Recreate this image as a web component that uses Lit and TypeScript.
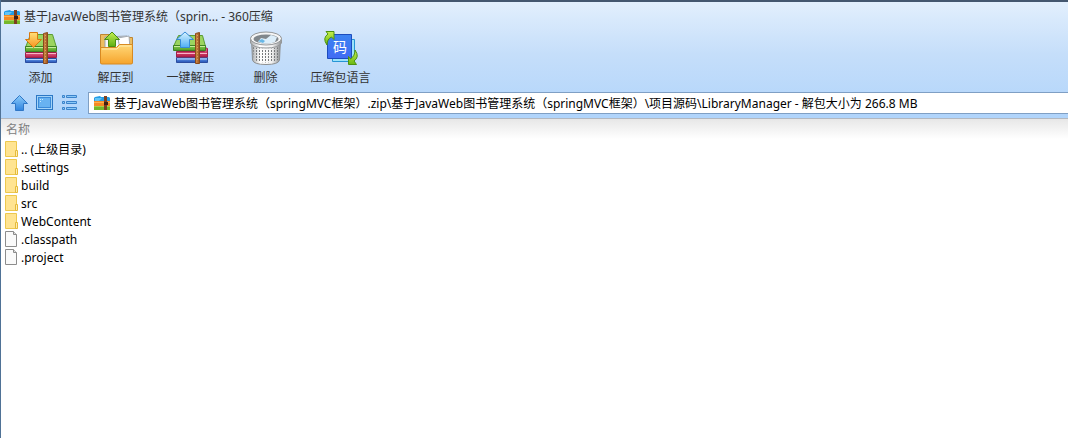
import { LitElement, html, css, svg, nothing } from "lit";
import { customElement, property, state } from "lit/decorators.js";

type Entry = { name: string; kind: "folder" | "file" };
type Tool = { icon: string; label: string };

const TOOLS: Tool[] = [
  { icon: "add", label: "添加" },
  { icon: "extract", label: "解压到" },
  { icon: "quick", label: "一键解压" },
  { icon: "trash", label: "删除" },
  { icon: "language", label: "压缩包语言" },
];

const ENTRIES: Entry[] = [
  { name: ".. (上级目录)", kind: "folder" },
  { name: ".settings", kind: "folder" },
  { name: "build", kind: "folder" },
  { name: "src", kind: "folder" },
  { name: "WebContent", kind: "folder" },
  { name: ".classpath", kind: "file" },
  { name: ".project", kind: "file" },
];

const gradient = (id: string, from: string, to: string) => svg`
  <linearGradient id=${id} x1="0" y1="0" x2="0" y2="1">
    <stop offset="0" stop-color=${from} /><stop offset="1" stop-color=${to} />
  </linearGradient>`;

const strap = svg`
  <path d="M21.500 4.500l4-1v31h-4z" fill="url(#strap)" stroke="#8a4a1c" />
  <path d="M23.500 6v27" stroke="#e0a058" stroke-dasharray="1 2" />`;

const archiveDefs = svg`<defs>
  ${gradient("green", "#86cf4c", "#4f9c28")}
  ${gradient("red", "#e8658c", "#b51c4b")}
  ${gradient("blue", "#6fa5f0", "#2351b5")}
  <linearGradient id="strap"><stop offset="0" stop-color="#d9944e" /><stop offset="1" stop-color="#97521f" /></linearGradient>
  ${gradient("orange", "#ffe079", "#f79520")}
  ${gradient("sky", "#d8f3ff", "#4eaef5")}
</defs>`;

const ICONS: Record<string, unknown> = {
  add: svg`<svg class="big" viewBox="0 0 38 38">${archiveDefs}
    <path d="M3.500 29.500h31v4h-31z" fill="url(#blue)" stroke="#2b4da0" />
    <path d="M4 30.500h30" stroke="#b5d2fa" />
    <path d="M3.500 23.500h31v5h-31z" fill="url(#red)" stroke="#9c2148" />
    <path d="M4 24.500h30" stroke="#f9b3c6" />
    <path d="M8.500 5.500h22l4 13h-31z" fill="#9bd45f" stroke="#5a9c33" />
    <path d="M3.500 17.500h31v5h-31z" fill="url(#green)" stroke="#3f8222" />
    <path d="M4 18.500h30" stroke="#c8eb9c" />
    ${strap}
    <path d="M7.500 3.500h8v7h4l-8 8-8-8h4z" fill="url(#orange)" stroke="#d87910" stroke-linejoin="round" />
  </svg>`,
  extract: svg`<svg class="big" viewBox="0 0 38 38"><defs>
      ${gradient("folder", "#ffd878", "#f6a42c")}${gradient("up", "#c7f052", "#5cae13")}</defs>
    <path d="M3.500 34V5.500h9l2 3h21V34z" fill="#edbd60" stroke="#bd8634" />
    <path d="M8 8l22-1 3 11-25 3z" fill="#f6f7fa" stroke="#9ba3ac" />
    <path d="M21 9l11-2 1 12-10 2z" fill="#fff" stroke="#a2a9b0" />
    <path d="M3.500 18.500h16l3-3h13v18q0 1.500-1.500 1.500H5q-1.500 0-1.500-1.500z" fill="url(#folder)" stroke="#d88a22" />
    <path d="M5 20h15l3-3h11" fill="none" stroke="#ffedae" />
    <path d="M11.500 17.500v-7h-4l7.500-7.500 7.500 7.500h-4v7z" fill="url(#up)" stroke="#4a8d13" stroke-linejoin="round" />
  </svg>`,
  quick: svg`<svg class="big" viewBox="0 0 38 38">${archiveDefs}
    <path d="M4.500 28.500h31v5h-31z" fill="url(#blue)" stroke="#2b4da0" />
    <path d="M5 30h30" stroke="#b5d2fa" />
    <path d="M4.500 22.500h28l.5-4 2.500 1v8.500h-31z" fill="url(#red)" stroke="#9c2148" />
    <path d="M5 24.500h30" stroke="#f9b3c6" />
    <path d="M6.500 6.500h24l3 11h-32z" fill="#9bd45f" stroke="#5a9c33" />
    <path d="M1.500 16.500h32v5h-32z" fill="url(#green)" stroke="#3f8222" />
    <path d="M2 17.500h31" stroke="#c8eb9c" />
    <g transform="translate(2 0)">${strap}</g>
    <path d="M8.500 18.500v-8h-4l8.500-7.500 8.500 7.500h-4v8z" fill="url(#sky)" stroke="#368bd7" stroke-linejoin="round" />
  </svg>`,
  trash: svg`<svg class="big" viewBox="0 0 38 38"><defs>
      <linearGradient id="can"><stop offset="0" stop-color="#a5a8aa" /><stop offset=".3" stop-color="#fff" />
      <stop offset=".7" stop-color="#f3f3f3" /><stop offset="1" stop-color="#8d9092" /></linearGradient>
      <pattern id="holes" width="3" height="3" patternUnits="userSpaceOnUse">
        <rect width="1" height="2" fill="#777a7c" /></pattern></defs>
    <path d="M4.500 10l1 21q1 4.500 13.500 4.500t13.500-4.500l1-21z" fill="url(#can)" stroke="#8c8f91" />
    <path d="M6 18q13 4 26 0l-1 13q-12 5-24 0z" fill="url(#holes)" />
    <path d="M3.500 9v5q3 5 15.500 5t15.500-5V9z" fill="url(#can)" stroke="#95989a" />
    <ellipse cx="19" cy="9.500" rx="15.500" ry="6.500" fill="#f5f5f5" stroke="#95989a" />
    <ellipse cx="19" cy="10" rx="12.500" ry="4.500" fill="#80878c" />
    <path d="M11 13l3-4 5 1 5-4 6 2-2 5q-8 3-17 0z" fill="#dceefa" />
    <path d="M11 12l4-2 3 2-2 2z" fill="#69b7e5" />
  </svg>`,
  language: svg`<svg class="big" viewBox="0 0 38 38"><defs>
      ${gradient("page", "#3c83f1", "#416cf4")}${gradient("turn", "#c8ef4c", "#68b813")}</defs>
    <path d="M10.500 10.500h22v22h-22z" fill="#9ce2fa" stroke="#2695d5" />
    <path d="M5.500 5.500h24v24h-24z" fill="url(#page)" stroke="#1d4cbd" />
    <text class="glyph" x="18" y="23" text-anchor="middle">码</text>
    <path d="M5 16q-5-7 1-11L4 2.500h8v8L9.500 8Q5 10 5 16z" fill="url(#turn)" stroke="#4e9210" stroke-linejoin="round" />
    <path d="M33 21q5 7-1 11l2.500 3.500h-8v-8l2 2.500Q33 27 33 21z" fill="url(#turn)" stroke="#4e9210" stroke-linejoin="round" />
  </svg>`,
  app: svg`<svg class="app" viewBox="0 0 16 14">
    <path d="M1 1l5-1 1 1h8l1 1v3H0V2z" fill="#249ce5" /><path d="M1 2h7l-3 3H1z" fill="#63c5f6" />
    <path d="M0 5h16v5H0z" fill="#f58a24" /><path d="M0 6h16v1H0z" fill="#ffb04c" />
    <path d="M0 10h16v4H0z" fill="#76b82b" /><path d="M0 10h16v1H0z" fill="#a4d04c" />
    <path d="M10 0h3v14h-3z" fill="#7c4020" /><path d="M10 6h4v3h-4z" fill="#402014" />
  </svg>`,
  up: svg`<svg class="nav" viewBox="0 0 18 18"><defs>${gradient("nav", "#8bcbfa", "#2f83df")}</defs>
    <path d="M5.500 16.500v-7h-4l8-8 8 8h-4v7z" fill="url(#nav)" stroke="#3077c6" stroke-linejoin="round" /></svg>`,
  view: svg`<svg class="nav" viewBox="0 0 18 18">
    <rect x="1.500" y="1.500" width="16" height="14" fill="#a3d3f8" stroke="#2d78c5" />
    <rect x="3.500" y="3.500" width="12" height="10" fill="#68b2f1" stroke="#3b8ad8" />
    <path d="M5 5.500h1M5 7.500h1M7 5.500h1" stroke="#c6eaff" /></svg>`,
  list: svg`<svg class="nav" viewBox="0 0 18 18"><g fill="#8ac8f7" stroke="#3a82cb">
    <path d="M2.500 1.500h2v2h-2zM2.500 7.500h2v2h-2zM2.500 13.500h2v2h-2zM6.500 1.500h10v2h-10zM6.500 7.500h10v2h-10zM6.500 13.500h10v2h-10z" /></g></svg>`,
  folder: svg`<svg class="entry" viewBox="0 0 14 18">
    <path d="M.500 1.500h11v15H.500z" fill="#ffe491" stroke="#edc84e" /><path d="M10.500 10.500h2v6h-2z" fill="#ffedb0" stroke="#e5bb3b" /></svg>`,
  file: svg`<svg class="entry" viewBox="0 0 14 18">
    <path d="M.500 1.500h8l3 3v12H.500z" fill="#fafafa" stroke="#8c8c8c" /><path d="M8.500 1.500v3h3" fill="#ddd" stroke="#8c8c8c" /></svg>`,
};

@customElement("archive-icon")
class ArchiveIcon extends LitElement {
  @property() name = "";

  static styles = css`
    :host { display: block; flex: none; }
    svg { display: block; overflow: visible; }
    .big { width: 38px; height: 38px; }
    .app { width: 16px; height: 14px; }
    .nav { width: 18px; height: 18px; }
    .entry { width: 14px; height: 18px; }
    .glyph { font: 14px "Noto Sans CJK SC", sans-serif; fill: #fff; }
  `;

  render() {
    return ICONS[this.name] ?? nothing;
  }
}

@customElement("app-root")
class AppRoot extends LitElement {
  @state() private path =
    "基于JavaWeb图书管理系统（springMVC框架）.zip\\基于JavaWeb图书管理系统（springMVC框架）\\项目源码\\LibraryManager - 解包大小为 266.8 MB";

  static styles = css`
    :host {
      display: block;
      box-sizing: border-box;
      min-height: 100vh;
      border-left: 1px solid #4f7296;
      background: #fff;
      font: 12px/18px "Noto Sans", "Noto Sans CJK SC", sans-serif;
      color: #000;
    }
    .chrome {
      border-top: 2px solid #44576f;
      border-bottom: 1px solid #b3b8c0;
      background: linear-gradient(#e2effd, #c5defa 45%, #b0d4fb);
    }
    .title {
      display: flex;
      align-items: center;
      gap: 4px;
      margin: 0;
      padding: 6px 3px 0;
      font: inherit;
      color: #333;
    }
    .tools { display: flex; padding: 3px 2px 0; }
    .tool {
      display: flex;
      flex-direction: column;
      align-items: center;
      gap: 2px;
      width: 75px;
      padding: 0;
      border: 0;
      background: none;
      font: inherit;
      color: #333;
      white-space: nowrap;
    }
    .bar { display: flex; align-items: center; padding: 5px 0 4px 9px; }
    .nav-button { width: 25px; padding: 0; border: 0; background: none; }
    .address {
      display: flex;
      flex: 1;
      align-items: center;
      gap: 4px;
      box-sizing: border-box;
      height: 22px;
      margin-left: 3px;
      padding-left: 5px;
      border: 1px solid #7f9fc4;
      border-right: 0;
      background: #fff;
    }
    .path {
      flex: 1;
      min-width: 0;
      padding: 2px 0 0;
      border: 0;
      outline: 0;
      background: none;
      font: inherit;
      color: inherit;
    }
    .listing {
      background: linear-gradient(#e7e7e7, #fff 20px);
    }
    .files { width: 100%; border-collapse: collapse; }
    .heading { height: 21px; padding: 0 5px; font-weight: 400; text-align: left; color: #808080; }
    .cell { padding: 0 4px; }
    .file { display: flex; align-items: center; gap: 2px; height: 18px; }
    .name { padding-top: 2px; }
  `;

  render() {
    return html`
      <header class="chrome">
        <h1 class="title"><archive-icon name="app"></archive-icon>基于JavaWeb图书管理系统（sprin... - 360压缩</h1>
        <div class="tools">
          ${TOOLS.map((t) => html`<button class="tool"><archive-icon name=${t.icon}></archive-icon>${t.label}</button>`)}
        </div>
        <div class="bar">
          <button class="nav-button" aria-label="向上"><archive-icon name="up"></archive-icon></button>
          <button class="nav-button" aria-label="视图"><archive-icon name="view"></archive-icon></button>
          <button class="nav-button" aria-label="列表"><archive-icon name="list"></archive-icon></button>
          <label class="address">
            <archive-icon name="app"></archive-icon>
            <input class="path" aria-label="路径" .value=${this.path}
              @input=${(e: Event) => (this.path = (e.target as HTMLInputElement).value)} />
          </label>
        </div>
      </header>
      <main class="listing">
        <table class="files">
          <thead><tr><th class="heading">名称</th></tr></thead>
          <tbody>
            ${ENTRIES.map((f) => html`<tr><td class="cell">
              <div class="file"><archive-icon name=${f.kind}></archive-icon><span class="name">${f.name}</span></div>
            </td></tr>`)}
          </tbody>
        </table>
      </main>
    `;
  }
}
